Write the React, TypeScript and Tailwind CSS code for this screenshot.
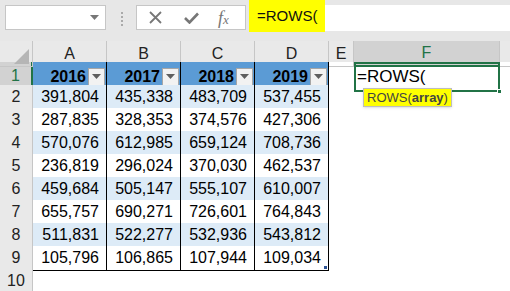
import React from 'react';

const years = ['2016', '2017', '2018', '2019'];
const rows: string[][] = [
  ['391,804', '435,338', '483,709', '537,455'],
  ['287,835', '328,353', '374,576', '427,306'],
  ['570,076', '612,985', '659,124', '708,736'],
  ['236,819', '296,024', '370,030', '462,537'],
  ['459,684', '505,147', '555,107', '610,007'],
  ['655,757', '690,271', '726,601', '764,843'],
  ['511,831', '522,277', '532,936', '543,812'],
  ['105,796', '106,865', '107,944', '109,034'],
];

const grid = 'grid grid-cols-[33px_74px_74px_74px_74px_25px_146px_1fr]';
const font = { fontFamily: '"Liberation Sans", Arial, sans-serif' };

const FilterButton: React.FC = () => (
  <div className="ml-[2px] flex h-[18px] w-[17px] shrink-0 items-center justify-center border border-[#a6a6a6] bg-[#f2f2f2]">
    <svg width="9" height="5" viewBox="0 0 9 5">
      <path d="M0 0h9L4.5 5z" fill="#5f5f5f" />
    </svg>
  </div>
);

const RowHeader: React.FC<{ n: number; active?: boolean }> = ({ n, active }) => (
  <div
    className={`flex items-center justify-center border-b border-[#c6c6c6] text-[16px] ${
      active ? 'bg-[#d2d2d2] text-[#217346] border-r-2 border-r-[#217346]' : 'bg-[#e9e9e9] text-[#222] border-r border-r-[#c6c6c6]'
    }`}
  >
    {n}
  </div>
);

const App: React.FC = () => {
  return (
    <div className="h-[291px] w-[510px] overflow-hidden bg-white" style={font}>
      {/* formula bar */}
      <div className="flex h-[41px] items-start bg-[#e7e7e7]">
        <div className="ml-[5px] mt-[5px] flex h-[25px] w-[101px] items-center justify-end border border-[#c6c6c6] bg-white pr-[6px]">
          <svg width="9" height="5" viewBox="0 0 9 5">
            <path d="M0 0h9L4.5 5z" fill="#777" />
          </svg>
        </div>
        <div className="ml-[15px] mt-[12px] flex w-[3px] flex-col gap-[2px]">
          <span className="h-[2px] w-[2px] bg-[#aaa]" />
          <span className="h-[2px] w-[2px] bg-[#aaa]" />
          <span className="h-[2px] w-[2px] bg-[#aaa]" />
          <span className="h-[2px] w-[2px] bg-[#aaa]" />
        </div>
        <div className="ml-[12px] mt-[5px] flex h-[25px] w-[110px] items-center border border-[#c6c6c6] bg-white">
          <svg className="ml-[12px]" width="13" height="13" viewBox="0 0 13 13">
            <path d="M1 1l11 11M12 1L1 12" stroke="#777" strokeWidth="1.8" />
          </svg>
          <svg className="ml-[22px]" width="15" height="12" viewBox="0 0 15 12">
            <path d="M1 6l4.5 4.5L14 1.5" stroke="#777" strokeWidth="2.6" fill="none" />
          </svg>
          <span
            className="ml-[19px] text-[18px] italic leading-none text-[#777]"
            style={{ fontFamily: '"Liberation Serif", "Times New Roman", serif' }}
          >
            f<span className="text-[13px]">x</span>
          </span>
        </div>
        <div className="ml-[3px] flex h-[32px] w-[76px] items-center bg-[#ffff00] pl-[8px] text-[15px] text-[#111]">
          =ROWS(
        </div>
        <div className="mt-[5px] h-[26px] flex-1 bg-white" />
      </div>

      {/* column headers */}
      <div className={`${grid} h-[21px] bg-[#e9e9e9] text-[16px] text-[#222]`}>
        <div className="relative border-r border-b border-[#c6c6c6]">
          <svg className="absolute bottom-[2px] right-[3px]" width="15" height="15" viewBox="0 0 15 15">
            <path d="M15 0v15H0z" fill="#b5b5b5" />
          </svg>
        </div>
        {['A', 'B', 'C', 'D', 'E'].map((c) => (
          <div key={c} className="flex items-center justify-center border-r border-b border-[#c6c6c6]">
            {c}
          </div>
        ))}
        <div className="flex items-center justify-center border-r border-b-2 border-r-[#c6c6c6] border-b-[#217346] bg-[#d2d2d2] text-[#217346]">
          F
        </div>
        <div className="border-b border-[#c6c6c6]" />
      </div>

      {/* row 1 */}
      <div className={`${grid} h-[23px]`}>
        <RowHeader n={1} active />
        {years.map((y) => (
          <div
            key={y}
            className="flex items-center justify-end border-r border-r-black bg-[#5b9bd5] pr-[1px] text-[16px] font-bold text-black"
          >
            {y}
            <FilterButton />
          </div>
        ))}
        <div />
        <div className="relative z-10 flex items-center border-2 border-[#217346] pl-[1px] text-[17px] text-black">
          =ROWS(
          <span className="absolute -bottom-[4px] -right-[4px] h-[5px] w-[5px] border border-white bg-[#217346]" />
          <div className="absolute left-[7px] top-[24px] flex h-[19px] items-center border border-[#bdbdbd] bg-[#ffff00] px-[3px] text-[13px] text-[#444] shadow-sm">
            ROWS(<span className="font-bold">array</span>)
          </div>
        </div>
        <div />
      </div>

      {/* data rows */}
      {rows.map((r, i) => (
        <div key={i} className={`${grid} h-[23px]`}>
          <RowHeader n={i + 2} />
          {r.map((v, j) => (
            <div
              key={j}
              className={`relative flex items-center justify-end border-r border-b border-black pr-[7px] text-[16px] text-black ${
                i % 2 === 0 ? 'bg-[#ddebf7]' : 'bg-white'
              }`}
            >
              {v}
              {i === rows.length - 1 && j === 3 && (
                <span className="absolute bottom-[1px] right-[1px] h-[3px] w-[3px] bg-[#2f5597]" />
              )}
            </div>
          ))}
          <div />
          <div />
          <div />
        </div>
      ))}

      {/* row 10 */}
      <div className={`${grid} h-[23px]`}>
        <RowHeader n={10} />
      </div>
    </div>
  );
};

export default App;
